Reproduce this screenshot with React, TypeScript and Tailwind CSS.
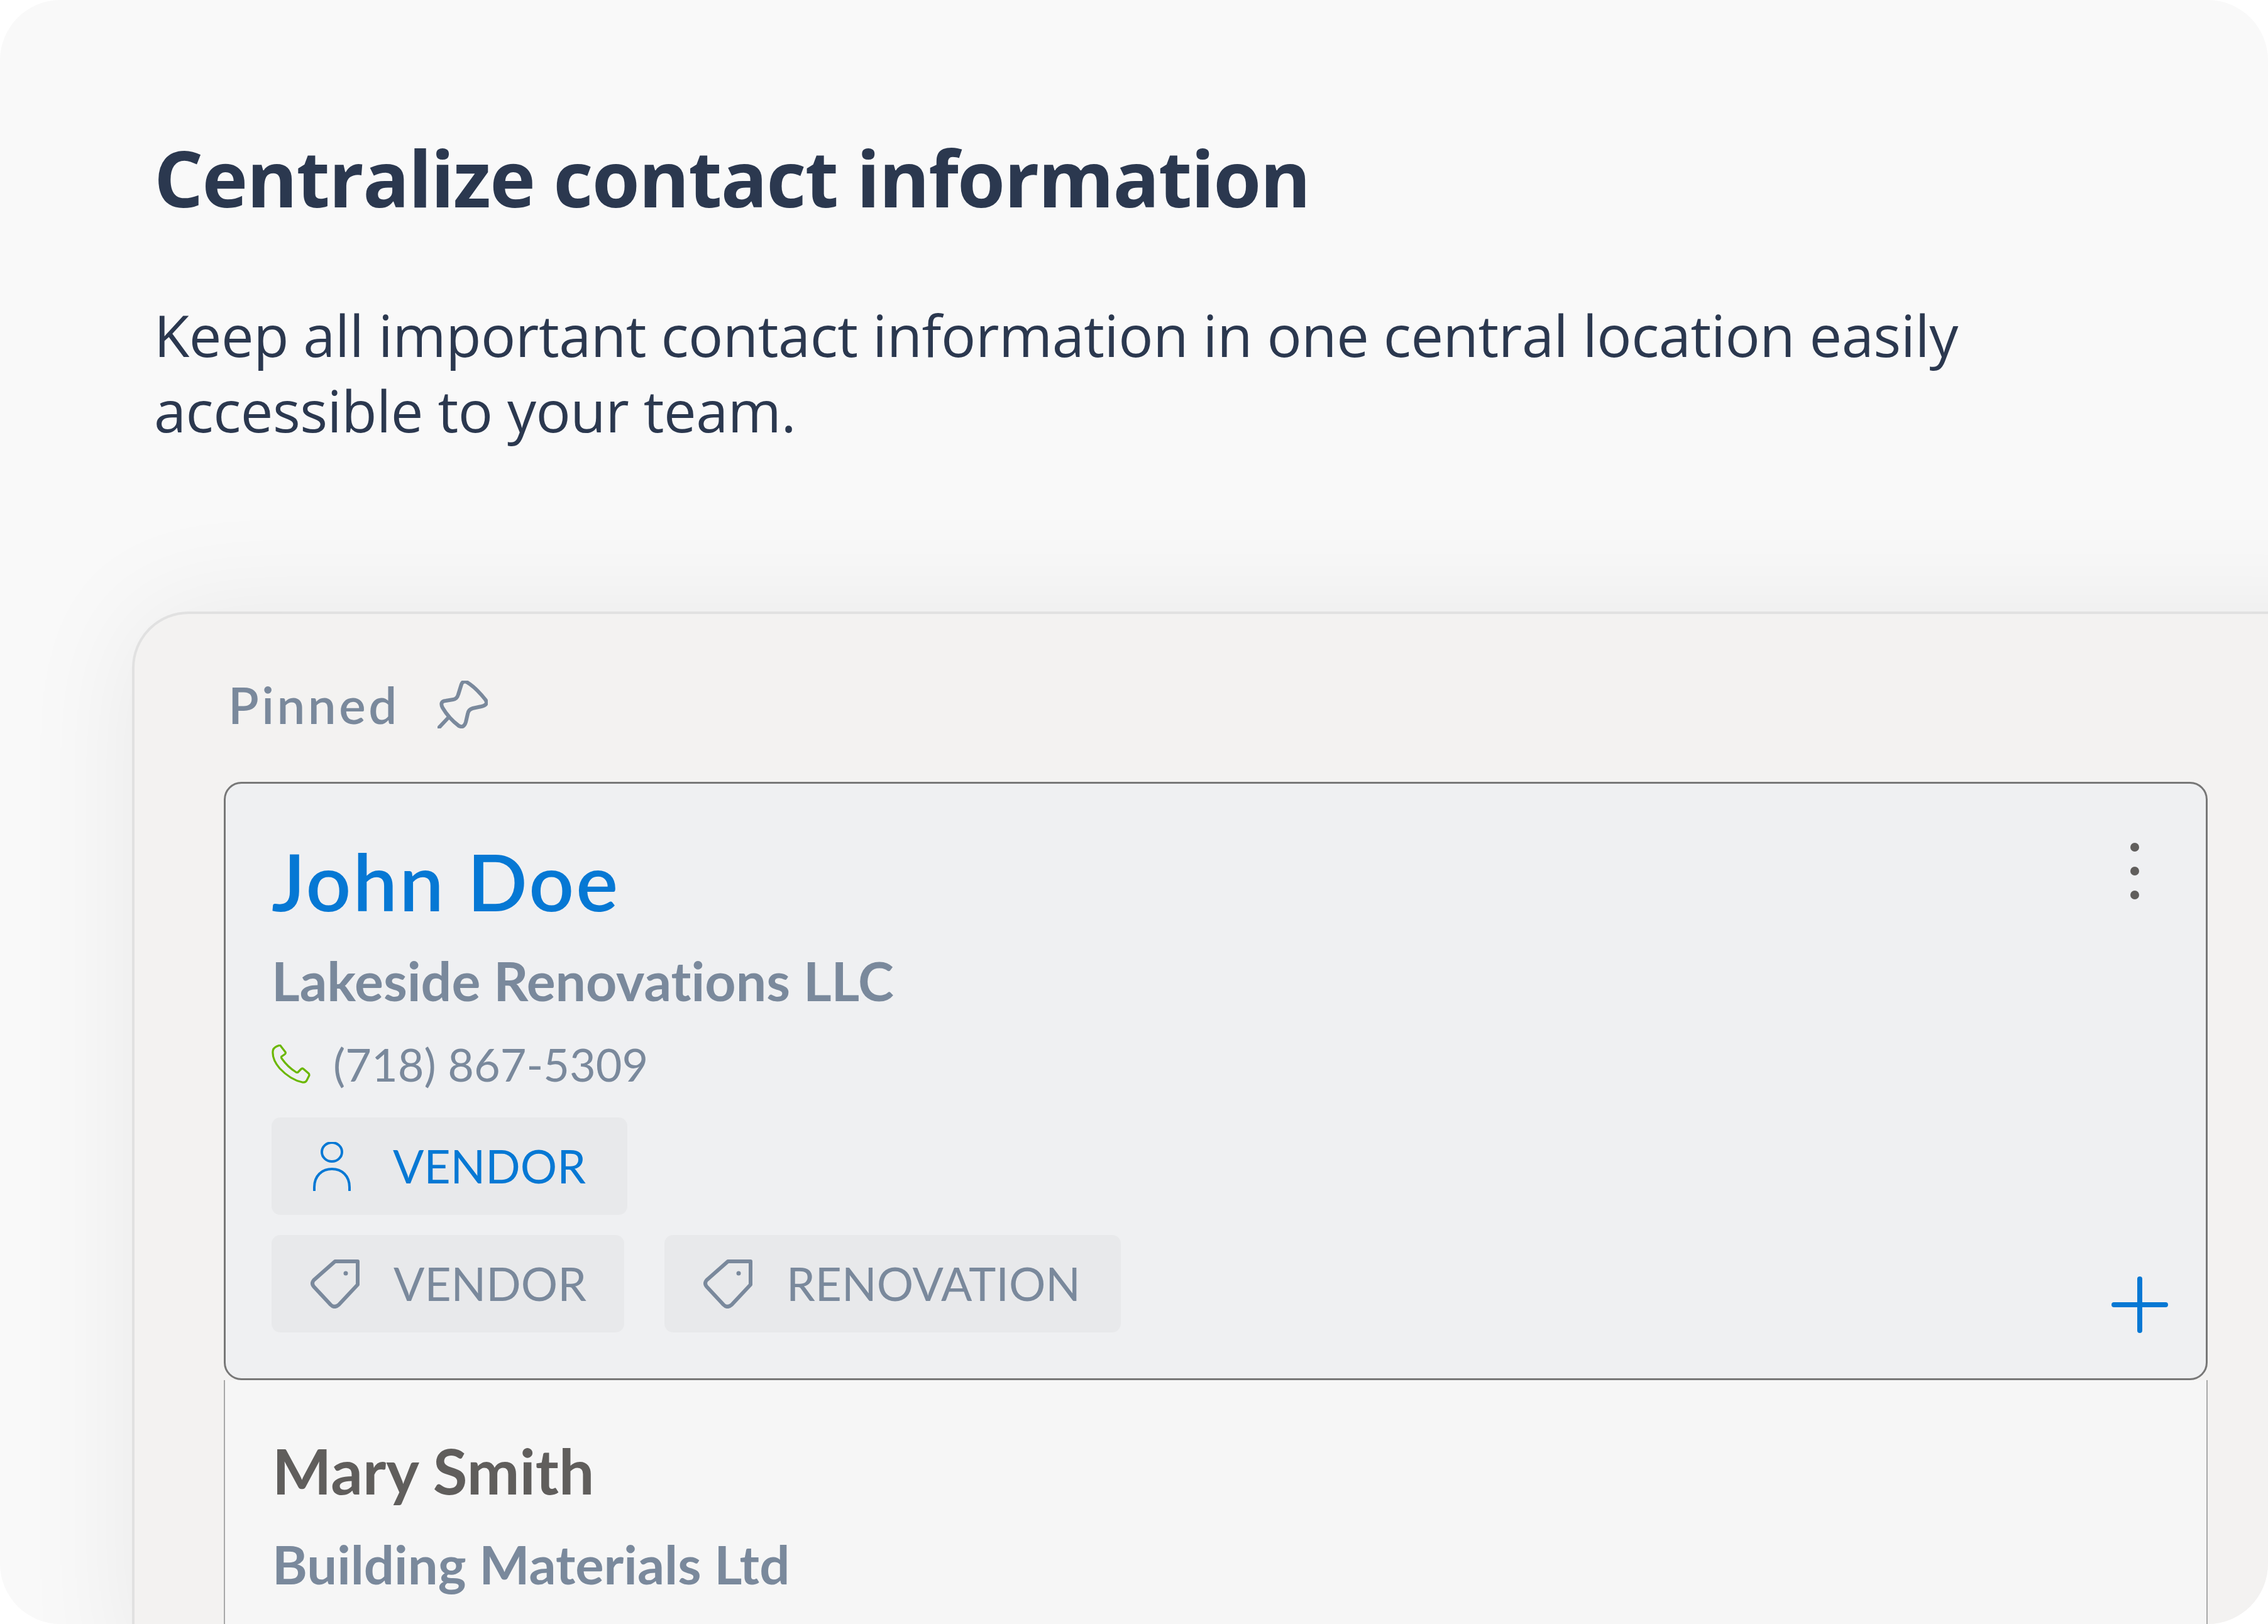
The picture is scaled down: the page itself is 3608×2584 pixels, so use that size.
const BLUE = "#0678d4";
const SLATE = "#7a899c";

function PinIcon() {
  return (
    <svg viewBox="0 0 80 76" className="h-[76px] w-[80px]" fill="none" stroke={SLATE} strokeWidth={6} strokeLinecap="round" strokeLinejoin="round">
      <path d="M38 6 Q40 0 46 2 Q60 10 76 30 Q82 38 70 41 L56 44 Q49 46 48 53 L45 66 Q42 76 34 72 Q18 60 8 43 Q3 33 13 32 L25 30 Q31 29 33 22 Z" />
      <path d="M18 58 L2 75" />
    </svg>
  );
}

function PhoneIcon() {
  return (
    <svg viewBox="0 0 62 62" className="h-[62px] w-[62px] shrink-0" fill="none" stroke="#6bb700" strokeWidth={3.2} strokeLinejoin="round">
      <path d="M8 3 L13 1 Q14 1 15 3 L22 12 Q23 14 21 15.5 L16 19 Q15 20 16 22 Q26 36 39 44 Q41 45 42 44 L47 39 Q49 37 51 39 L59 46 Q60 47 60 49 L56 57 Q54 61 49 60 Q30 56 13 38 Q1 24 2 11 Q2 6 8 3 Z" />
    </svg>
  );
}

function PersonIcon() {
  return (
    <svg viewBox="0 0 61 78" className="h-[78px] w-[61px]" fill="none" stroke={BLUE} strokeWidth={4} strokeLinecap="round">
      <ellipse cx="30" cy="16" rx="16" ry="15" />
      <path d="M2 77 V72 C2 54 14 43 30 43 C46 43 58 54 58 72 V77" />
    </svg>
  );
}

function TagIcon() {
  return (
    <svg viewBox="0 0 78 78" className="h-[78px] w-[78px]" fill="none" stroke={SLATE} strokeWidth={6} strokeLinejoin="round">
      <path d="M39 3 H75 V40 L45 72 Q38 78 32 72 L5 43 Q1 38 5 33 Z" />
      <circle cx="56" cy="22" r="3.5" fill={SLATE} stroke="none" />
    </svg>
  );
}

function Chip({ label, tone, icon, className }: { label: string; tone: "blue" | "slate"; icon: React.ReactNode; className: string }) {
  return (
    <div className={`flex h-[155px] items-center rounded-[14px] bg-[#e8e9eb] ${className}`}>
      {icon}
      <span className={`text-[73px] leading-none ${tone === "blue" ? "text-[#0678d4]" : "text-[#7a899c]"}`}>{label}</span>
    </div>
  );
}

export default function App() {
  return (
    <div className="h-[2584px] w-[3608px] overflow-hidden rounded-[96px] bg-[#f9f9f9] pt-[208px] pl-[245px] font-['Open_Sans',sans-serif] text-[#2b384f]">
      <h1 className="text-[123px] leading-[150px] font-bold tracking-[-1.8px]">Centralize contact information</h1>
      <p className="mt-[115px] max-w-[3200px] text-[92px] leading-[120px] tracking-[-0.5px]">
        Keep all important contact information in one central location easily accessible to your team.
      </p>

      <div className="mt-[260px] -ml-[35px] h-[1700px] w-[3600px] rounded-tl-[90px] border-[4px] border-[#e1e1e1] bg-[#f3f2f1] pt-[94px] pl-[149px] font-['Lato',sans-serif] [font-variant-ligatures:none] shadow-[0_0_190px_rgba(0,0,0,0.07)]">
        <div className="flex items-center">
          <span className="text-[80px] leading-[100px] font-semibold tracking-[4.5px] text-[#7a899c]">Pinned</span>
          <span className="ml-[60px]">
            <PinIcon />
          </span>
        </div>

        <div className="mt-[73px] -ml-[7px] w-[3156px]">
          <div className="flex h-[952px] justify-between rounded-[28px] border-[3px] border-[#777777] bg-[#eff0f2] pt-[85px] pr-[60px] pb-[72px] pl-[73px]">
            <div>
              <div className="text-[126px] leading-[140px] font-semibold tracking-[3px] text-[#0678d4]">John Doe</div>
              <div className="mt-[38px] text-[86px] leading-[100px] font-bold text-[#7a899c]">Lakeside Renovations LLC</div>
              <div className="mt-[38px] flex items-center">
                <PhoneIcon />
                <span className="ml-[36px] text-[72px] leading-[90px] text-[#7a899c]">(718) 867-5309</span>
              </div>
              <div className="mt-[40px] flex">
                <Chip label="VENDOR" tone="blue" icon={<PersonIcon />} className="gap-x-[66px] pr-[66px] pl-[66px]" />
              </div>
              <div className="mt-[32px] flex gap-[64px]">
                <Chip label="VENDOR" tone="slate" icon={<TagIcon />} className="gap-x-[54px] pr-[60px] pl-[62px]" />
                <Chip label="RENOVATION" tone="slate" icon={<TagIcon />} className="gap-x-[54px] pr-[64px] pl-[62px]" />
              </div>
            </div>
            <div className="flex flex-col items-end justify-between">
              <div className="mt-[9px] mr-[46px] flex flex-col gap-[24px]">
                <div className="h-[14px] w-[14px] rounded-full bg-[#605e5c]" />
                <div className="h-[14px] w-[14px] rounded-full bg-[#605e5c]" />
                <div className="h-[14px] w-[14px] rounded-full bg-[#605e5c]" />
              </div>
              <svg viewBox="0 0 90 90" className="h-[90px] w-[90px]" stroke={BLUE} strokeWidth={8} strokeLinecap="round">
                <path d="M45 4 V86 M4 45 H86" />
              </svg>
            </div>
          </div>
          <div className="h-[500px] border-x-2 border-[#a8a8a8] bg-[#f6f6f6] pt-[83px] pl-[75px]">
            <div className="text-[100px] leading-[120px] font-bold text-[#605e5c]">Mary Smith</div>
            <div className="mt-[39px] text-[85px] leading-[100px] font-bold text-[#7a899c]">Building Materials Ltd</div>
          </div>
        </div>
      </div>
    </div>
  );
}
